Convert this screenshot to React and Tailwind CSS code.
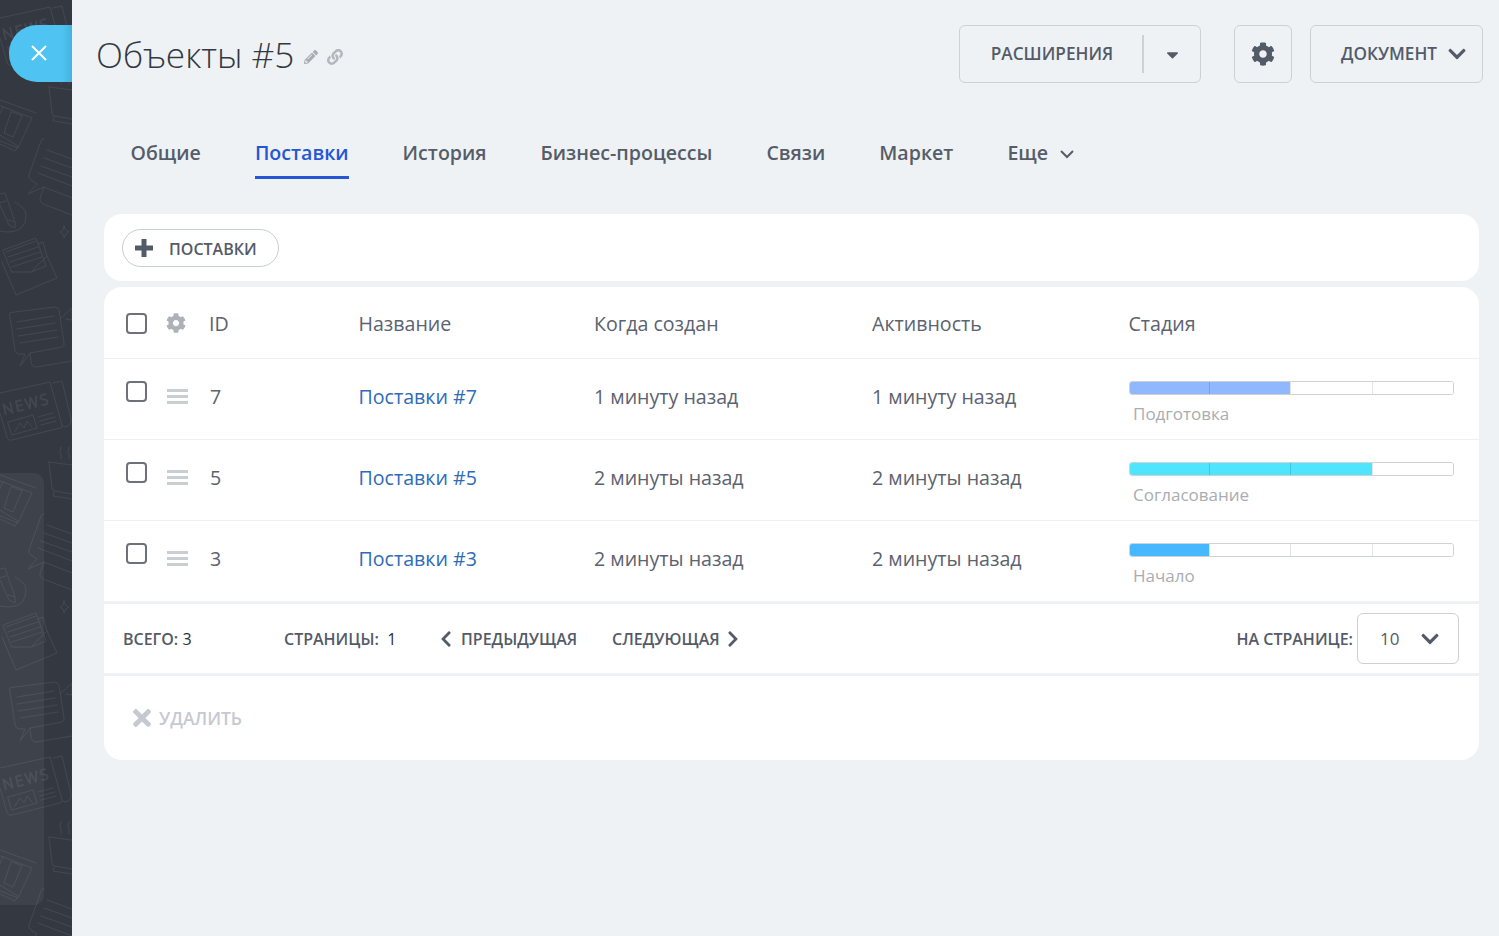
import React from "react";
import { FaCog, FaPencilAlt, FaLink, FaChevronDown, FaChevronLeft, FaChevronRight, FaTimes, FaCaretDown } from "react-icons/fa";

const font = { fontFamily: '"Open Sans", sans-serif' };

function SidebarPattern() {
  return (
    <svg className="absolute inset-0 w-full h-full" width="72" height="936" fill="none" stroke="#43474f" strokeWidth="1" strokeLinejoin="round" strokeLinecap="round">
      <defs>
        <pattern id="doodle" width="72" height="375" patternUnits="userSpaceOnUse" y="0">
          <path d="M0 100 L36 113 M-2 105 L32 118 L18 148 L-2 140 M3 107 L-3 120 M11 112 L4 133 L13 137 L22 116 Z M-2 134 L18 146 L15 151 L-2 143" />
          <path d="M49 87 L72 90 M49 87 L52 113 Q52 116 55 116 L72 119 M54 117 L53 121 L72 124" />
          <path d="M61 72 Q59 77 61 80 Q62 82 61 84 M69 72 Q67 77 69 80 Q70 82 69 84" />
          <path d="M44 139 Q42 138 41 141 L29 175 Q28 178 31 180 L37 184 L28 194 L44 187 L72 198 M47 150 L72 159 M44 158 L72 168 M41 166 L72 177 M38 173 L72 186 M44 187 L40 198 Q39 202 43 204 L72 215" />
          <path d="M0 194 L5 193 L15 222 L15 228 L9 225 L0 205 M0 203 L6 201 M15 202 Q26 208 26 215 Q26 232 8 232 L0 231 M8 220 L15 222" />
          <path d="M64 226 Q64 231 60 232 Q64 233 64 238 Q65 233 69 232 Q65 231 64 226 Z" />
          <path d="M3 250 L36 238 L46 266 L31 272 L12 272 Z M6 252 L36 241 M8 257 L38 247 M10 262 L40 252 M12 267 L42 257 M2 262 L16 295 L57 278 L47 256 L31 272 M38 244 L43 242 L47 256" />
          <path d="M10 313 Q9 315 10 317 L15 350 Q16 354 19 354 L25 354 L20 366 L30 353 L62 347 Q65 346 64 343 L59 310 Q58 307 55 307 Z M17 322 L54 316 M17 329 L55 323 M18 336 L57 330 M20 343 L58 337 M30 353 L31 362 Q32 367 36 367 L72 361 M61 318 L72 308 L72 320 L66 319" />
          <path d="M0 18 L50 7 L62 50 Q63 52 60 53 L12 65 Q8 66 7 62 L0 38 M53 8 L62 6 L71 44 Q72 51 64 52 L62 50" />
          <path d="M8 47 L33 40 L37 53 L12 60 Z M15 56 L20 48 L24 53 L27 46 L32 52 M38 42 L53 38 M40 46 L55 42 M41 50 L56 46" />
          <text x="4" y="40" fontSize="15" letterSpacing="2" fontWeight="300" transform="rotate(-14 4 40)" style={{ fontFamily: '"Open Sans", sans-serif' }}>NEWS</text>
        </pattern>
      </defs>
      <rect width="72" height="936" fill="url(#doodle)" stroke="none" />
    </svg>
  );
}

function Checkbox() {
  return <span className="block w-[21px] h-[21px] rounded-[4px] border-2 border-[#6e7278] bg-white" />;
}

function Burger() {
  return (
    <span className="flex flex-col gap-[3px] w-[21px]">
      <span className="h-[3px] bg-[#c9ced3]" />
      <span className="h-[3px] bg-[#c9ced3]" />
      <span className="h-[3px] bg-[#c9ced3]" />
    </span>
  );
}

const COLS = "grid grid-cols-[232.5px_235.5px_278px_256.5px_325px] px-[22px]";

function Stage({ filled, color, divider, label }) {
  return (
    <div className="flex flex-col w-[325px]">
      <div className="grid grid-cols-[80px_81px_82px_1fr] h-[14px] border border-[#cfd2d6] rounded-[3px] overflow-hidden">
        {[0, 1, 2, 3].map((i) => (
          <span
            key={i}
            className={i === 3 ? "" : "border-r"}
            style={{
              backgroundColor: i < filled ? color : "#ffffff",
              borderColor: i < filled - 1 ? divider : "#e2e4e7",
            }}
          />
        ))}
      </div>
      <span className="pl-[4.5px] pt-[9px] text-[17px] leading-[20px] text-[#a9adb2]">{label}</span>
    </div>
  );
}

function Row({ id, when, filled, color, divider, label, last }) {
  return (
    <div className={`${COLS} ${last ? "h-[80px]" : "h-[81px] border-b border-[#eef0f3]"} pt-[22px]`}>
      <div className="flex items-start">
        <Checkbox />
        <span className="ml-[20px] mt-[8px]"><Burger /></span>
        <span className="ml-[22px] mt-[3px] text-[19.6px] leading-[26px] text-[#5b6270]">{id}</span>
      </div>
      <a className="text-[19.6px] leading-[26px] mt-[3px] text-[#2f6bb8]">Поставки #{id}</a>
      <span className="text-[19.6px] leading-[26px] mt-[3px] text-[#5b6270]">{when}</span>
      <span className="text-[19.6px] leading-[26px] mt-[3px] text-[#5b6270]">{when}</span>
      <Stage filled={filled} color={color} divider={divider} label={label} />
    </div>
  );
}

function Tab({ children, active }) {
  return (
    <span className={`h-[41px] flex items-start pt-[1px] text-[19.6px] leading-[28px] font-semibold ${active ? "text-[#2456d6] border-b-[3px] border-[#2456d6]" : "text-[#565d68]"}`}>
      {children}
    </span>
  );
}

export default function App() {
  return (
    <div className="flex w-full h-[936px] overflow-hidden bg-[#eef2f5]" style={font}>
      <aside className="relative w-[72px] shrink-0 bg-[#343841] overflow-hidden">
        <SidebarPattern />
        <div className="absolute left-0 top-[473px] w-[44px] h-[432px] bg-white/5 rounded-r-[10px]" />
        <div className="absolute left-[9px] top-[25px] w-[63px] h-[57px] rounded-l-[28px] bg-gradient-to-r from-[#4fc3f1] from-85% to-[#45b2de] flex items-center pl-[21px] pb-[2px] text-white">
          <svg width="18" height="18" viewBox="0 0 18 18" fill="none" stroke="white" strokeWidth="2"><path d="M2 2 L16 16 M16 2 L2 16" /></svg>
        </div>
      </aside>

      <main className="flex-1 min-w-0 flex flex-col pl-[32px] pr-[20px]">
        <header className="flex items-start justify-between pt-[25px] -mr-[4px]">
          <div className="flex items-center -ml-[8px] h-[58px]">
            <h1 className="text-[35.2px] leading-[58px] font-light text-[#343841] whitespace-nowrap">Объекты #5</h1>
            <FaPencilAlt className="ml-[10px] mt-[6px] text-[14px] text-[#a9adb2]" />
            <FaLink className="ml-[9px] mt-[6px] text-[16px] text-[#b4b8bc]" />
          </div>
          <div className="flex items-start">
            <div className="w-[242px] h-[58px] border border-[#cdd1d5] rounded-[6px] flex items-center text-[#545b68] text-[17.2px] font-semibold">
              <span className="w-[184px] h-[38px] pl-[2px] flex items-center justify-center border-r-2 border-[#cdd1d5]">РАСШИРЕНИЯ</span>
              <span className="flex-1 flex justify-center"><FaCaretDown className="text-[19px] text-[#545b68]" /></span>
            </div>
            <div className="ml-[33px] w-[58px] h-[58px] border border-[#cdd1d5] rounded-[6px] flex items-center justify-center">
              <FaCog className="text-[24px] text-[#545b68]" />
            </div>
            <div className="ml-[18px] w-[173px] h-[58px] border border-[#cdd1d5] rounded-[6px] flex items-center pl-[30px] gap-[10px] text-[#545b68] text-[17.2px] font-semibold">
              <span>ДОКУМЕНТ</span>
              <FaChevronDown className="text-[20px]" />
            </div>
          </div>
        </header>

        <nav className="flex items-start gap-[54px] pl-[26.5px] mt-[55px]">
          <Tab>Общие</Tab>
          <Tab active>Поставки</Tab>
          <Tab>История</Tab>
          <Tab>Бизнес-процессы</Tab>
          <Tab>Связи</Tab>
          <Tab>Маркет</Tab>
          <Tab>
            Еще
            <svg className="ml-[12px] mt-[9px]" width="14" height="12" viewBox="0 0 14 12" fill="none" stroke="#565d68" strokeWidth="2"><path d="M1 3 L7 9 L13 3" /></svg>
          </Tab>
        </nav>

        <section className="mt-[35px] h-[67px] bg-white rounded-[18px] flex items-center px-[18px]">
          <div className="w-[157px] h-[38px] border border-[#c8ced6] rounded-full flex items-center pl-[12px] text-[16px] font-semibold text-[#545b68]">
            <svg width="18" height="18" viewBox="0 0 18 18" fill="#545b68"><path d="M6.5 0h5v6.5H18v5h-6.5V18h-5v-6.5H0v-5h6.5z" /></svg>
            <span className="ml-[16px] pt-[2px]">ПОСТАВКИ</span>
          </div>
        </section>

        <section className="mt-[6px] h-[473px] bg-white rounded-[18px] flex flex-col">
          <div className={`${COLS} h-[72px] pt-[2px] items-center border-b border-[#eef0f3] text-[19.6px] text-[#5b6270]`}>
            <div className="flex items-center">
              <Checkbox />
              <FaCog className="ml-[19px] text-[20px] text-[#aeb2b8]" />
              <span className="ml-[23px]">ID</span>
            </div>
            <span>Название</span>
            <span>Когда создан</span>
            <span>Активность</span>
            <span>Стадия</span>
          </div>

          <Row id="7" when="1 минуту назад" filled={2} color="#8fb8ff" divider="#74a0e6" label="Подготовка" />
          <Row id="5" when="2 минуты назад" filled={3} color="#50e5ff" divider="#3fc6e0" label="Согласование" />
          <Row id="3" when="2 минуты назад" filled={1} color="#47b8ff" divider="#47b8ff" label="Начало" last />

          <div className="h-[75px] border-y-[3px] border-[#eef2f5] flex items-center pl-[19px] pr-[20px] text-[16px] font-semibold text-[#545b68] whitespace-nowrap">
            <span className="w-[161px]">ВСЕГО: <span className="font-normal text-[#2b2f36]">3</span></span>
            <span className="w-[153px]">СТРАНИЦЫ:&nbsp; <span className="font-normal text-[#2b2f36]">1</span></span>
            <FaChevronLeft className="text-[18px]" />
            <span className="ml-[6px] w-[151px]">ПРЕДЫДУЩАЯ</span>
            <span>СЛЕДУЮЩАЯ</span>
            <FaChevronRight className="ml-[4px] text-[18px]" />
            <span className="ml-auto">НА СТРАНИЦЕ:</span>
            <div className="ml-[4px] w-[102px] h-[51px] border border-[#cdd1d5] rounded-[6px] flex items-center justify-between pl-[22px] pr-[18px] text-[17px] font-normal">
              <span>10</span>
              <FaChevronDown className="text-[20px]" />
            </div>
          </div>

          <div className="flex items-center flex-1 pl-[25px] text-[17.5px] font-semibold text-[#c6c9cf]">
            <FaTimes className="text-[26px]" />
            <span className="ml-[4px]">УДАЛИТЬ</span>
          </div>
        </section>
      </main>
    </div>
  );
}
